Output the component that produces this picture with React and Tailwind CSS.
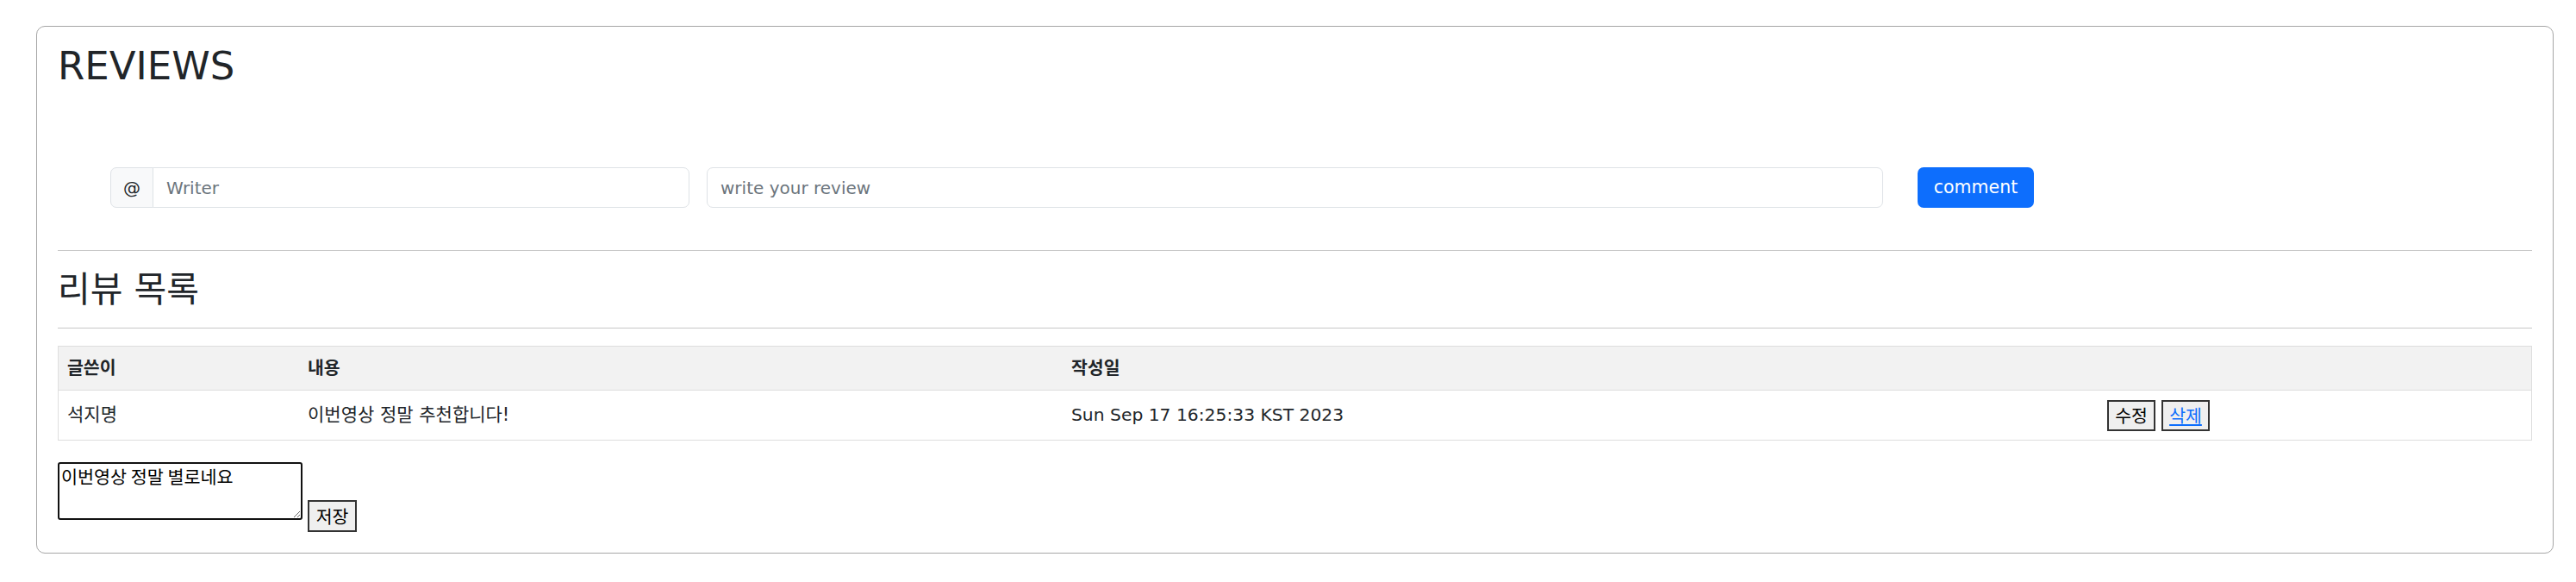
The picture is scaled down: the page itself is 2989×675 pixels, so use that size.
export default function App() {
  return (
    <div className="min-h-[675px] bg-white pt-[30px] pl-[42px] font-['DejaVu_Sans','Noto_Sans_CJK_KR',sans-serif] text-[#212529]">
      <div className="w-[2921px] rounded-[10px] border border-[#a6a6a6] px-[24px] pt-[20px] pb-[24px]">
        <h1 className="text-[45px] leading-[52px] font-normal">REVIEWS</h1>

        <div className="mt-[91px] flex h-[47px] pl-[61px]">
          <div className="flex w-[672px]">
            <span className="flex w-[50px] shrink-0 items-center justify-center rounded-l-[7px] border border-[#dee2e6] bg-[#f8f9fa] text-[20px]">
              @
            </span>
            <input
              placeholder="Writer"
              className="-ml-px min-w-0 flex-1 rounded-r-[7px] border border-[#dee2e6] bg-white px-[15px] text-[20px] outline-none placeholder:text-[#6c757d]"
            />
          </div>
          <input
            placeholder="write your review"
            className="ml-[20px] w-[1365px] rounded-[7px] border border-[#dee2e6] bg-white px-[15px] text-[20px] outline-none placeholder:text-[#6c757d]"
          />
          <button className="ml-[40px] w-[135px] rounded-[7px] bg-[#0d6efd] text-[20.5px] text-white">
            comment
          </button>
        </div>

        <div className="mt-[49px] h-px bg-[#c7c7c7]" />
        <div className="flex h-[89px] items-center">
          <h2 className="text-[41px] leading-[50px] font-normal">리뷰 목록</h2>
        </div>
        <div className="h-px bg-[#c7c7c7]" />

        <div className="mt-[20px] border border-[#dedede] text-[20.5px]">
          <div className="grid h-[51px] grid-cols-[279px_886px_1202px_1fr] items-center border-b border-[#dedede] bg-[#f2f2f2] text-[20.5px] font-bold">
            <div className="pl-[10px]">글쓴이</div>
            <div className="pl-[10px]">내용</div>
            <div className="pl-[10px]">작성일</div>
            <div className="pl-[10px]" />
          </div>
          <div className="grid h-[57px] grid-cols-[279px_886px_1202px_1fr] items-center">
            <div className="pl-[10px] text-[21px]">석지명</div>
            <div className="pl-[10px] text-[21px]">이번영상 정말 추천합니다!</div>
            <div className="pl-[10px] text-[20.3px]">Sun Sep 17 16:25:33 KST 2023</div>
            <div className="flex items-center pl-[10px] font-['Noto_Sans_CJK_KR',sans-serif]">
              <button className="flex h-[36px] w-[56px] items-center justify-center border-2 border-[#333] bg-[#efefef] text-[20.5px] text-black">
                수정
              </button>
              <button className="ml-[7px] flex h-[36px] w-[56px] items-center justify-center border-2 border-[#333] bg-[#efefef] text-[20.5px]">
                <a href="#" className="text-[#0d6efd] underline">삭제</a>
              </button>
            </div>
          </div>
        </div>

        <div className="mt-[25px] flex items-start">
          <textarea
            defaultValue="이번영상 정말 별로네요"
            className="h-[67px] w-[284px] rounded-[3px] border-2 border-[#111] bg-white px-[2px] py-[2px] font-['Noto_Sans_CJK_KR',sans-serif] text-[20.7px] leading-[25px] text-black outline-none"
          />
          <button className="mt-[44px] ml-[6px] flex h-[37px] w-[57px] items-center justify-center border-2 border-[#333] bg-[#efefef] font-['Noto_Sans_CJK_KR',sans-serif] text-[20.5px] text-black">
            저장
          </button>
        </div>
      </div>
    </div>
  );
}
